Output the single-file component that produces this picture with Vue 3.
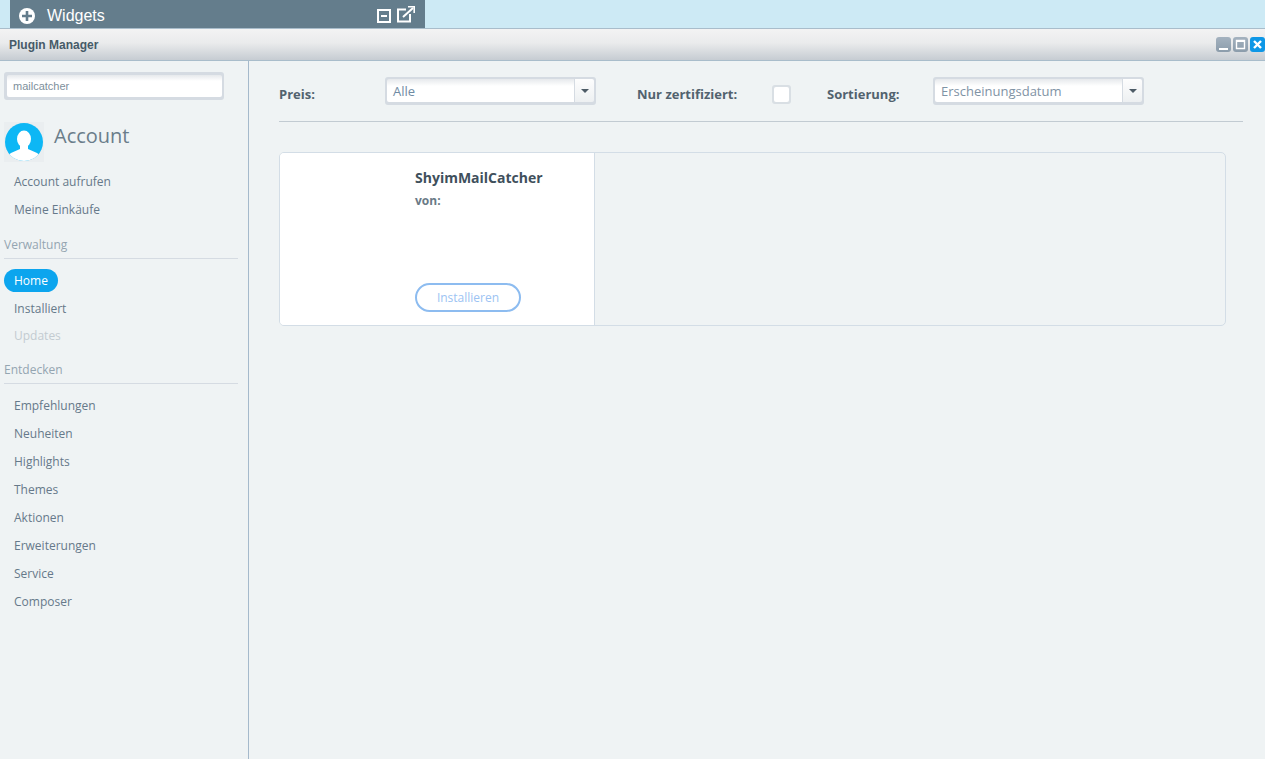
<script setup>
const accountLinks = ['Account aufrufen', 'Meine Einkäufe']
const discover = ['Empfehlungen', 'Neuheiten', 'Highlights', 'Themes', 'Aktionen', 'Erweiterungen', 'Service', 'Composer']
</script>

<template>
  <div class="page">
    <header class="desktop-bar">
      <div class="widgets">
        <svg class="plus" width="16" height="16" viewBox="0 0 16 16">
          <circle cx="8" cy="8" r="8" fill="#fff" />
          <path d="M8 3v10M3 8h10" stroke="#647d8c" stroke-width="2.6" />
        </svg>
        <span class="widgets-label">Widgets</span>
        <svg class="w-min" width="14" height="14" viewBox="0 0 14 14">
          <rect x="1" y="1" width="12" height="12" fill="none" stroke="#fff" stroke-width="2" />
          <path d="M4 7h6" stroke="#fff" stroke-width="2" />
        </svg>
        <svg class="w-open" width="18" height="17" viewBox="0 0 18 17">
          <path d="M9 3.5H1v12h12V8" fill="none" stroke="#fff" stroke-width="2" />
          <path d="M6 11 16 2" stroke="#fff" stroke-width="2" fill="none" />
          <path d="M11 .8h6.2V7" stroke="#fff" stroke-width="1.6" fill="none" />
        </svg>
      </div>
    </header>

    <div class="titlebar">
      <span class="title">Plugin Manager</span>
      <div class="win-btns">
        <span class="win-btn grey">
          <svg width="15" height="15" viewBox="0 0 15 15"><path d="M3 12h9" stroke="#fff" stroke-width="2" /></svg>
        </span>
        <span class="win-btn grey">
          <svg width="15" height="15" viewBox="0 0 15 15"><path d="M3.5 3.5h8v8h-8z" fill="none" stroke="#fff" stroke-width="1.4" /><path d="M3 4h9" stroke="#fff" stroke-width="2" /></svg>
        </span>
        <span class="win-btn blue">
          <svg width="15" height="15" viewBox="0 0 15 15"><path d="M4 4l7 7M11 4l-7 7" stroke="#fff" stroke-width="2.4" /></svg>
        </span>
      </div>
    </div>

    <div class="body">
      <aside class="sidebar">
        <div class="search"><input class="search-input" value="mailcatcher" /></div>

        <div class="account">
          <svg class="avatar" width="40" height="40" viewBox="-1 -1 40 40">
            <defs><clipPath id="av"><circle cx="19" cy="19" r="19" /></clipPath></defs>
            <circle cx="19" cy="19" r="19" fill="#0db7f5" />
            <g clip-path="url(#av)" fill="#fff">
              <ellipse cx="19" cy="16" rx="7" ry="8.5" />
              <path d="M15 22h8v4l9 4c2 1 3 4 3 8H3c0-4 1-7 3-8l9-4z" />
            </g>
          </svg>
          <span class="account-title">Account</span>
        </div>

        <ul class="links account-links">
          <li v-for="l in accountLinks" :key="l">{{ l }}</li>
        </ul>

        <div class="section first">Verwaltung</div>
        <div class="home-row"><span class="pill">Home</span></div>
        <div class="link single">Installiert</div>
        <div class="link single disabled">Updates</div>

        <div class="section second">Entdecken</div>
        <ul class="links discover">
          <li v-for="l in discover" :key="l">{{ l }}</li>
        </ul>
      </aside>

      <main class="main">
        <div class="filters">
          <label class="f-label preis">Preis:</label>
          <div class="select price-select">
            <span class="select-text">Alle</span>
            <span class="select-arrow"><i></i></span>
          </div>
          <label class="f-label cert">Nur zertifiziert:</label>
          <span class="checkbox"><i></i></span>
          <label class="f-label sort">Sortierung:</label>
          <div class="select sort-select">
            <span class="select-text">Erscheinungsdatum</span>
            <span class="select-arrow"><i></i></span>
          </div>
        </div>

        <section class="card">
          <div class="card-left">
            <h3 class="plugin-name">ShyimMailCatcher</h3>
            <div class="plugin-by">von:</div>
            <button class="install">Installieren</button>
          </div>
        </section>
      </main>
    </div>
  </div>
</template>

<style>
html, body { margin: 0; padding: 0; overflow: hidden; }
</style>

<style scoped>
.page {
  width: 1265px;
  height: 759px;
  display: flex;
  flex-direction: column;
  overflow: hidden;
  font-family: "Open Sans", sans-serif;
  background: #eff3f4;
}
.desktop-bar {
  height: 28px;
  flex: none;
  background: #cdeaf5;
  padding-left: 10px;
}
.widgets {
  width: 415px;
  height: 28px;
  background: #647d8c;
  display: flex;
  align-items: center;
  box-sizing: border-box;
  padding-left: 9px;
  padding-top: 4px;
  color: #fff;
}
.widgets-label {
  font: 16px "Liberation Sans", sans-serif;
  margin-left: 12px;
  width: 330px;
}
.w-min { margin-right: 6px; margin-left: 0; }
.w-open { margin-top: -4px; }
.titlebar {
  height: 33px;
  flex: none;
  box-sizing: border-box;
  border-top: 1px solid #a9bdcb;
  border-bottom: 1px solid #a9bdcb;
  background: linear-gradient(#f3f3f3, #eaebec 45%, #c6ccd2);
  display: flex;
  align-items: center;
  justify-content: space-between;
  padding: 0 0 0 9px;
}
.title {
  font: bold 12px "Liberation Sans", sans-serif;
  color: #465a68;
}
.win-btns { display: flex; gap: 2px; }
.win-btn {
  width: 15px;
  height: 15px;
  border-radius: 3px;
  display: block;
}
.win-btn svg { display: block; }
.win-btn.grey { background: linear-gradient(#a4b2bf, #8b9cab); }
.win-btn.blue { background: #0e97e6; }
.body { flex: 1; display: flex; min-height: 0; }
.sidebar {
  width: 249px;
  flex: none;
  box-sizing: border-box;
  border-right: 1px solid #a5b9cb;
  padding: 11px 10px 0 4px;
}
.search {
  width: 220px;
  height: 28px;
  box-sizing: border-box;
  background: #d5dbe2;
  border-radius: 3px;
  padding: 3px 2px 3px 3px;
}
.search-input {
  display: block;
  width: 100%;
  height: 22px;
  box-sizing: border-box;
  border: 0;
  outline: 0;
  border-radius: 2px;
  background: linear-gradient(#e6e9ec, #fff 6px);
  padding: 0 0 0 6px;
  font: 11px "Liberation Sans", sans-serif;
  color: #7d8f9c;
}
.account {
  display: flex;
  align-items: center;
  margin-top: 23px;
  height: 38px;
}
.avatar { display: block; flex: none; background: #eaeef0; }
.account-title {
  font-size: 20px;
  color: #6a7d8a;
  margin-left: 10px;
  margin-top: -14px;
}
.links { list-style: none; margin: 0; padding: 0 0 0 10px; font-size: 12px; color: #66798a; }
.links li { height: 28px; line-height: 28px; }
.account-links { margin-top: 7px; }
.section {
  font-size: 12px;
  color: #94a5b1;
  height: 22px;
  line-height: 18px;
  border-bottom: 1px solid #d5dbe2;
}
.section.first { margin-top: 12px; }
.section.second { margin-top: 12px; margin-bottom: 8px; }
.home-row { margin-top: 9px; height: 23px; }
.pill {
  display: inline-block;
  width: 54px;
  height: 23px;
  line-height: 23px;
  box-sizing: border-box;
  padding-left: 10px;
  border-radius: 12px;
  background: #0ca5ee;
  color: #fff;
  font-size: 12px;
}
.link {
  font-size: 12px;
  color: #66798a;
  padding-left: 10px;
  height: 27px;
  line-height: 27px;
}
.home-row + .link { margin-top: 4px; }
.link.disabled { color: #c3cbd1; }
.main { flex: 1; min-width: 0; padding-left: 30px; }
.filters {
  width: 964px;
  height: 61px;
  box-sizing: border-box;
  border-bottom: 1px solid #c2cbd2;
  display: flex;
  align-items: flex-start;
  padding-top: 16px;
}
.f-label {
  font-size: 13px;
  font-weight: 700;
  color: #52626e;
  line-height: 18px;
  margin-top: 8px;
}
.preis { width: 106px; }
.cert { margin-left: 41px; width: 136px; }
.sort { margin-left: 36px; width: 106px; }
.select {
  display: flex;
  box-sizing: border-box;
  height: 28px;
  background: #d5dbe2;
  border-radius: 3px;
  padding: 2px 2px 3px 2px;
}
.price-select { width: 211px; }
.sort-select { width: 211px; }
.select-text {
  flex: 1;
  background: linear-gradient(#e6e9ec, #fff 7px);
  border-radius: 2px 0 0 2px;
  font-size: 13px;
  line-height: 25px;
  height: 23px;
  padding-left: 6px;
  color: #6f8ba4;
}
.sort-select .select-text { color: #7f93a5; }
.select-arrow {
  width: 19px;
  flex: none;
  margin-left: 1px;
  background: linear-gradient(#fdfdfd, #edf0f2);
  border-radius: 0 2px 2px 0;
  display: flex;
  align-items: center;
  justify-content: center;
}
.select-arrow i {
  display: block;
  width: 0;
  height: 0;
  border-left: 4px solid transparent;
  border-right: 4px solid transparent;
  border-top: 4px solid #4d5b66;
}
.checkbox {
  width: 19px;
  height: 19px;
  box-sizing: border-box;
  margin-top: 8px;
  margin-left: -1px;
  background: #d9dfe4;
  border-radius: 3px;
  padding: 2px;
}
.checkbox i { display: block; width: 15px; height: 15px; background: #fff; border-radius: 2px; }
.card {
  width: 947px;
  height: 174px;
  box-sizing: border-box;
  margin-top: 30px;
  border: 1px solid #d3dde6;
  border-radius: 5px;
  overflow: hidden;
}
.card-left {
  width: 315px;
  height: 100%;
  box-sizing: border-box;
  background: #fff;
  border-right: 1px solid #d3dde6;
  padding: 15px 0 0 135px;
  position: relative;
}
.plugin-name {
  margin: 0;
  font-size: 14px;
  font-weight: 700;
  line-height: 19px;
  color: #3f505c;
}
.plugin-by {
  font-size: 12px;
  font-weight: 700;
  line-height: 16px;
  margin-top: 6px;
  color: #6a7a86;
}
.install {
  position: absolute;
  left: 135px;
  top: 130px;
  width: 106px;
  height: 29px;
  box-sizing: border-box;
  border: 2px solid #8dbcf0;
  border-radius: 15px;
  background: #fff;
  padding: 0;
  font: 12px "Open Sans", sans-serif;
  color: #9cc3f3;
}
</style>
